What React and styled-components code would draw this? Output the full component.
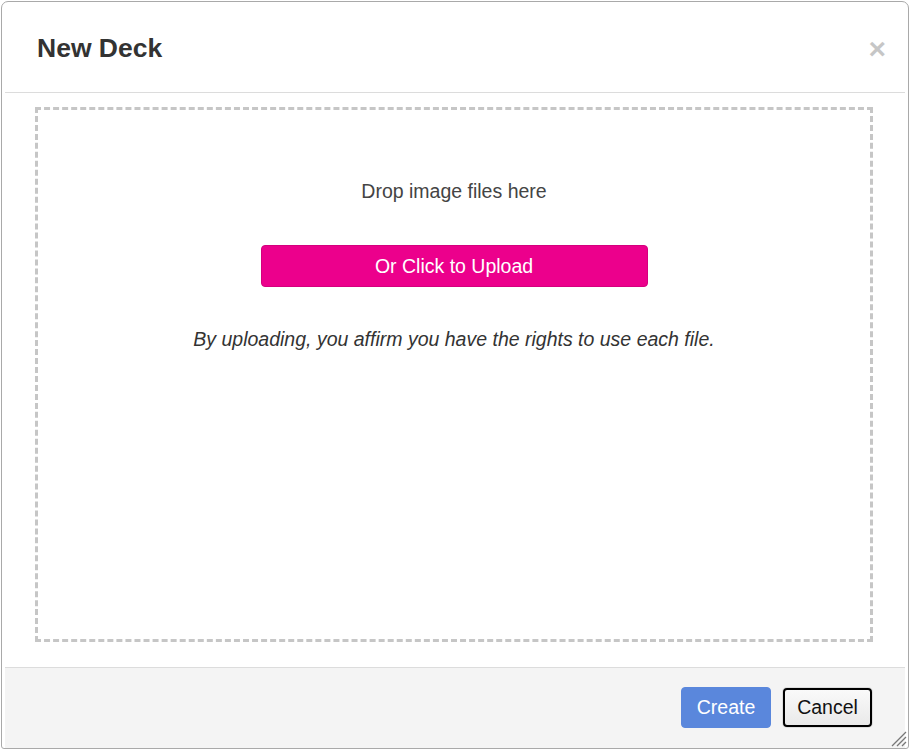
import React from 'react';
import styled, { createGlobalStyle } from 'styled-components';

const GlobalStyle = createGlobalStyle`
  *, *::before, *::after {
    box-sizing: border-box;
  }
  html, body {
    margin: 0;
    padding: 0;
    background: #fff;
  }
  body {
    font-family: "Liberation Sans", Arial, sans-serif;
  }
`;

const Page = styled.div`
  width: 911px;
  height: 751px;
  padding: 1px 2px 2px 1px;
`;

const Modal = styled.div`
  position: relative;
  height: 100%;
  display: flex;
  flex-direction: column;
  border: 1px solid #a9a9a9;
  border-radius: 7px 7px 3px 3px;
  background: #fff;
  overflow: hidden;
`;

const Header = styled.div`
  height: 91px;
  display: flex;
  align-items: center;
  justify-content: space-between;
  padding: 0 19px 0 32px;
  margin: 0 3px;
  border-bottom: 1px solid #dcdcdc;
  flex-shrink: 0;
`;

const Title = styled.h2`
  margin: 0;
  padding-top: 2px;
  font-size: 26.5px;
  font-weight: 700;
  color: #333;
`;

const Close = styled.span`
  font-size: 30px;
  font-weight: 700;
  color: #000;
  opacity: 0.22;
  line-height: 1;
  margin-top: 4px;
`;

const Body = styled.div`
  flex: 1;
  padding: 14px 35px 25px 33px;
  display: flex;
`;

const DropZone = styled.div`
  flex: 1;
  border: 3px dashed #c6c6c6;
  display: flex;
  flex-direction: column;
  align-items: center;
  padding-top: 70px;
`;

const DropText = styled.div`
  font-size: 19.5px;
  color: #444;
`;

const UploadButton = styled.button`
  margin-top: 42px;
  width: 387px;
  height: 42px;
  border: 1px solid #d4007e;
  border-radius: 4px;
  background: #ec008c;
  color: #fff;
  font-family: inherit;
  font-size: 19.5px;
`;

const Notice = styled.div`
  margin-top: 41px;
  font-size: 19.5px;
  font-style: italic;
  color: #333;
`;

const Footer = styled.div`
  height: 81px;
  flex-shrink: 0;
  margin: 0 3px;
  border-top: 1px solid #dcdcdc;
  background: #f4f4f4;
  display: flex;
  align-items: center;
  justify-content: flex-end;
  gap: 12px;
  padding: 0 33px 2px 0;
`;

const FooterButton = styled.button`
  height: ${p => (p.primary ? '41px' : '39px')};
  width: ${p => (p.primary ? '90px' : '89px')};
  padding: 0;
  font-family: inherit;
  font-size: 19.5px;
  border-radius: 4px;
  color: ${p => (p.primary ? '#fff' : '#111')};
  background: ${p => (p.primary ? '#5a87dc' : 'linear-gradient(#fafafa, #e9e9e9)')};
  border: ${p => (p.primary ? '1px solid #5a87dc' : '2px solid #000')};
  box-shadow: ${p => (p.primary ? 'none' : '0 0 0 1px #ddd')};
`;

const Grip = styled.svg`
  position: absolute;
  right: 1px;
  bottom: 1px;
`;

export default function App() {
  return (
    <Page>
      <GlobalStyle />
      <Modal>
        <Header>
          <Title>New Deck</Title>
          <Close>×</Close>
        </Header>
        <Body>
          <DropZone>
            <DropText>Drop image files here</DropText>
            <UploadButton>Or Click to Upload</UploadButton>
            <Notice>By uploading, you affirm you have the rights to use each file.</Notice>
          </DropZone>
        </Body>
        <Footer>
          <FooterButton primary>Create</FooterButton>
          <FooterButton>Cancel</FooterButton>
        </Footer>
        <Grip width="18" height="18" viewBox="0 0 18 18">
          <path d="M17 3 L3 17 M17 8 L8 17 M17 13 L13 17" stroke="#777" strokeWidth="1.3" />
        </Grip>
      </Modal>
    </Page>
  );
}
